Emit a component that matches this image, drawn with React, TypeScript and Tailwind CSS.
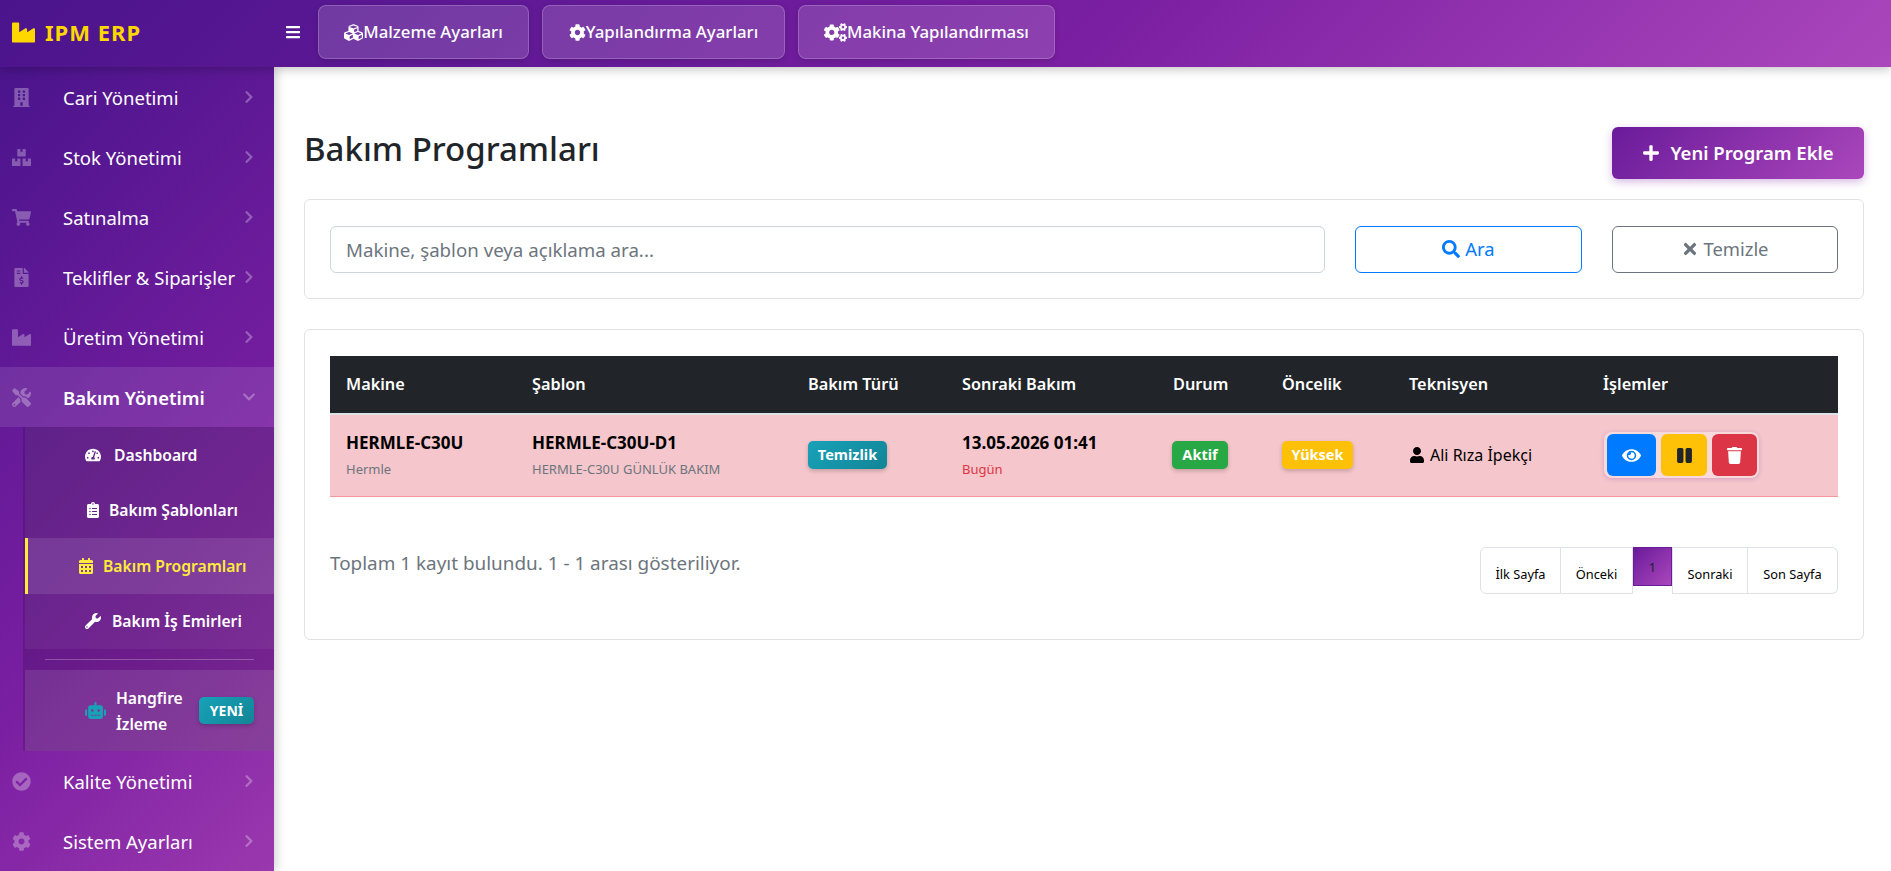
import type { ReactNode } from "react";
import {
  FaBars,
  FaBoxes,
  FaBuilding,
  FaCalendarAlt,
  FaCheckCircle,
  FaChevronDown,
  FaChevronRight,
  FaClipboardList,
  FaCog,
  FaCogs,
  FaCubes,
  FaEye,
  FaFileInvoiceDollar,
  FaIndustry,
  FaPause,
  FaPlus,
  FaRobot,
  FaSearch,
  FaShoppingCart,
  FaTachometerAlt,
  FaTimes,
  FaTools,
  FaTrash,
  FaUser,
  FaWrench,
} from "react-icons/fa";

function TopButton({ icon, label, width }: { icon: ReactNode; label: string; width: string }) {
  return (
    <button
      className={`flex h-[54px] ${width} items-center justify-center rounded-lg border border-white/20 bg-white/15 text-[16.8px] font-medium text-white shadow-[0_2px_6px_rgba(0,0,0,0.15)]`}
    >
      {icon}
      {label}
    </button>
  );
}

function MenuRow({
  icon,
  label,
  open,
}: {
  icon: ReactNode;
  label: string;
  open?: boolean;
}) {
  return (
    <div
      className={`flex h-[60px] shrink-0 items-center pl-3 pr-[18px] text-[18.5px] text-white ${
        open ? "bg-white/10 font-semibold" : ""
      }`}
    >
      <span className="flex w-[51px] shrink-0 text-[19px] text-white/30">{icon}</span>
      <span className="flex-1 whitespace-nowrap pt-[2px]">{label}</span>
      <span className="text-[14px] text-white/30">{open ? <FaChevronDown /> : <FaChevronRight />}</span>
    </div>
  );
}

function SubRow({
  icon,
  label,
  active,
  gap,
}: {
  icon: ReactNode;
  label: string;
  active?: boolean;
  gap: string;
}) {
  return (
    <div
      className={`flex h-[55.5px] items-center text-[15.7px] font-semibold ${gap} ${
        active
          ? "border-l-[3px] border-[#ffeb3b] bg-white/15 pl-[50px] text-[#ffeb3b]"
          : "bg-white/5 pl-[60px] text-white"
      }`}
    >
      <span className="text-[16px]">{icon}</span>
      <span className="whitespace-nowrap pt-[2px]">{label}</span>
    </div>
  );
}

function Sidebar() {
  return (
    <aside className="flex w-[274px] shrink-0 flex-col overflow-hidden bg-[linear-gradient(135deg,#4a148c,#7b1fa2_62%,#9a38ae)] shadow-[2px_0_10px_rgba(0,0,0,0.2)]">
      <MenuRow icon={<FaBuilding />} label="Cari Yönetimi" />
      <MenuRow icon={<FaBoxes />} label="Stok Yönetimi" />
      <MenuRow icon={<FaShoppingCart />} label="Satınalma" />
      <MenuRow icon={<FaFileInvoiceDollar />} label="Teklifler & Siparişler" />
      <MenuRow icon={<FaIndustry />} label="Üretim Yönetimi" />
      <MenuRow icon={<FaTools />} label="Bakım Yönetimi" open />
      <div className="ml-[23px] flex flex-col bg-black/15 pl-[2px]">
        <SubRow icon={<FaTachometerAlt />} label="Dashboard" gap="gap-[13px]" />
        <SubRow icon={<FaClipboardList />} label="Bakım Şablonları" gap="gap-[8px]" />
        <SubRow icon={<FaCalendarAlt />} label="Bakım Programları" gap="gap-[9px]" active />
        <SubRow icon={<FaWrench />} label="Bakım İş Emirleri" gap="gap-[11px]" />
        <div className="flex h-[21px] items-center px-5">
          <div className="h-px w-full bg-white/25" />
        </div>
        <div className="flex h-[81px] items-center gap-[10px] bg-white/10 pl-[60px] text-[15.7px] font-semibold leading-[26px] text-white">
          <FaRobot className="shrink-0 text-[21px] text-[#17a2b8]" />
          <span className="w-[67px]">Hangfire İzleme</span>
          <span className="ml-[6px] flex h-[27px] w-[55px] items-center justify-center rounded-[5px] bg-[linear-gradient(135deg,#17a2b8,#138496)] text-[14px] font-bold shadow-[0_2px_4px_rgba(0,0,0,0.2)]">
            YENİ
          </span>
        </div>
      </div>
      <MenuRow icon={<FaCheckCircle />} label="Kalite Yönetimi" />
      <MenuRow icon={<FaCog />} label="Sistem Ayarları" />
    </aside>
  );
}

const columns = [
  { label: "Makine", width: "w-[186px]" },
  { label: "Şablon", width: "w-[276px]" },
  { label: "Bakım Türü", width: "w-[154px]" },
  { label: "Sonraki Bakım", width: "w-[211px]" },
  { label: "Durum", width: "w-[109px]" },
  { label: "Öncelik", width: "w-[127px]" },
  { label: "Teknisyen", width: "w-[194px]" },
  { label: "İşlemler", width: "flex-1" },
];

function Badge({ children, color, width }: { children: ReactNode; color: string; width: string }) {
  return (
    <span
      className={`-mt-[2px] flex h-[28px] ${width} items-center justify-center rounded-[5px] ${color} text-[14.5px] font-bold text-white shadow-[0_2px_4px_rgba(0,0,0,0.2)]`}
    >
      {children}
    </span>
  );
}

function ProgramTable() {
  return (
    <div>
      <div className="flex h-[57px] items-center bg-[#212529] text-[16.3px] font-semibold text-white">
        {columns.map((col) => (
          <div key={col.label} className={`${col.width} px-[16px]`}>
            {col.label}
          </div>
        ))}
      </div>
      <div className="flex h-[84px] items-center border-t-2 border-b border-t-[#dee2e6] border-b-[#f5979f] bg-[#f5c6cb] text-black">
        <div className="w-[186px] px-[16px] pt-[1px]">
          <div className="text-[17px] font-bold leading-[24px]">HERMLE-C30U</div>
          <div className="mt-[2px] text-[13px] leading-[24px] text-[#6c757d]">Hermle</div>
        </div>
        <div className="w-[276px] px-[16px] pt-[1px]">
          <div className="text-[17px] font-bold leading-[24px]">HERMLE-C30U-D1</div>
          <div className="mt-[2px] text-[13px] leading-[24px] text-[#6c757d]">HERMLE-C30U GÜNLÜK BAKIM</div>
        </div>
        <div className="w-[154px] px-[16px]">
          <Badge color="bg-[linear-gradient(135deg,#17a2b8,#138496)]" width="w-[79px]">
            Temizlik
          </Badge>
        </div>
        <div className="w-[211px] px-[16px] pt-[1px]">
          <div className="text-[17px] font-bold leading-[24px]">13.05.2026 01:41</div>
          <div className="mt-[2px] text-[13px] leading-[24px] text-[#dc3545]">Bugün</div>
        </div>
        <div className="w-[109px] pl-[15px] pr-[16px]">
          <Badge color="bg-[#28a745]" width="w-[56px]">
            Aktif
          </Badge>
        </div>
        <div className="w-[127px] px-[16px]">
          <Badge color="bg-[#ffc107]" width="w-[71px]">
            Yüksek
          </Badge>
        </div>
        <div className="-mt-[2px] flex w-[194px] items-center gap-[5px] px-[16px] text-[16px]">
          <FaUser className="text-[16px]" />
          <span className="whitespace-nowrap">Ali Rıza İpekçi</span>
        </div>
        <div className="flex-1 pl-[17px] pr-[15px]">
          <div className="-mt-[1px] flex w-[155px] gap-[5px] rounded-lg bg-white/35 p-[2px] pl-[3px] shadow-[0_1px_4px_rgba(123,31,162,0.25)]">
            <button className="flex h-[42px] w-[49px] items-center justify-center rounded-md bg-[#007bff] text-[19px] text-white">
              <FaEye />
            </button>
            <button className="flex h-[42px] w-[46px] items-center justify-center rounded-md bg-[#ffc107] text-[17px] text-[#212529]">
              <FaPause />
            </button>
            <button className="flex h-[42px] w-[45px] items-center justify-center rounded-md bg-[#dc3545] text-[17px] text-white">
              <FaTrash />
            </button>
          </div>
        </div>
      </div>
    </div>
  );
}

function Pagination() {
  const cell = "flex h-[47px] items-end justify-center border-y border-r border-[#dee2e6] pb-[9px] text-[12.8px] text-black";
  return (
    <div className="flex items-start">
      <div className={`${cell} w-[81px] rounded-l-md border-l`}>İlk Sayfa</div>
      <div className={`${cell} w-[72px]`}>Önceki</div>
      <div className="flex h-[39px] w-[39px] items-center justify-center border border-[#6a1b9a] bg-[linear-gradient(135deg,#6a1b9a,#ab47bc)] pt-[3px] text-[12.8px] text-[#212529]">
        1
      </div>
      <div className={`${cell} w-[76px] border-l`}>Sonraki</div>
      <div className={`${cell} w-[90px] rounded-r-md`}>Son Sayfa</div>
    </div>
  );
}

export default function App() {
  return (
    <div className="flex h-[871px] w-full flex-col overflow-hidden bg-white font-['Noto_Sans','Open_Sans',sans-serif]">
      {/* Top bar */}
      <header className="relative z-10 flex h-[67px] shrink-0 items-center bg-[linear-gradient(135deg,#4a148c,#7b1fa2_58%,#ab47bc)] pb-[3px] shadow-[0_2px_10px_rgba(0,0,0,0.25)]">
        <div className="flex w-[285px] shrink-0 items-center gap-[10px] pl-3 text-[22px] font-bold tracking-[1px] text-[#ffd700]">
          <FaIndustry className="text-[23px]" />
          IPM ERP
        </div>
        <FaBars className="w-[16px] shrink-0 text-[16px] text-white" />
        <div className="ml-[17px] flex gap-[13px]">
          <TopButton icon={<FaCubes className="text-[19px]" />} label="Malzeme Ayarları" width="w-[211px]" />
          <TopButton icon={<FaCog className="text-[17px]" />} label="Yapılandırma Ayarları" width="w-[243px]" />
          <TopButton icon={<FaCogs className="text-[23px]" />} label="Makina Yapılandırması" width="w-[257px]" />
        </div>
      </header>

      <div className="flex min-h-0 flex-1">
        <Sidebar />
        <main className="flex-1 pl-[30px] pr-[27px] pt-[60px]">
          <div className="flex h-[52px] items-center justify-between">
            <h1 className="pb-[8px] text-[33px] font-medium text-[#212529]">Bakım Programları</h1>
            <button className="flex h-[52px] w-[252px] items-center justify-center gap-[10px] rounded-md bg-[linear-gradient(135deg,#6a1b9a,#ab47bc)] text-[18.5px] font-semibold text-white shadow-[0_3px_8px_rgba(123,31,162,0.3)]">
              <FaPlus className="text-[18px]" />
              Yeni Program Ekle
            </button>
          </div>

          {/* Search */}
          <div className="mt-[20px] flex h-[100px] items-center gap-[30px] rounded-md border border-[#e2e2e2] px-[25px]">
            <input
              placeholder="Makine, şablon veya açıklama ara..."
              className="h-[47px] flex-1 rounded-md border border-[#ced4da] px-[15px] text-[18.7px] outline-none placeholder:text-[#6c757d]"
            />
            <button className="flex h-[47px] w-[227px] items-center justify-center gap-[5px] rounded-md border border-[#007bff] text-[18.4px] text-[#007bff]">
              <FaSearch className="text-[18px]" />
              Ara
            </button>
            <button className="flex h-[47px] w-[226px] items-center justify-center gap-[4px] rounded-md border border-[#6c757d] text-[18.4px] text-[#6c757d]">
              <FaTimes className="text-[18px]" />
              Temizle
            </button>
          </div>

          {/* Results */}
          <div className="mt-[30px] h-[311px] rounded-md border border-[#e2e2e2] px-[25px] pt-[26px]">
            <ProgramTable />
            <div className="mt-[50px] flex items-start justify-between">
              <p className="mt-[2px] text-[18.9px] text-[#6c757d]">Toplam 1 kayıt bulundu. 1 - 1 arası gösteriliyor.</p>
              <Pagination />
            </div>
          </div>
        </main>
      </div>
    </div>
  );
}
